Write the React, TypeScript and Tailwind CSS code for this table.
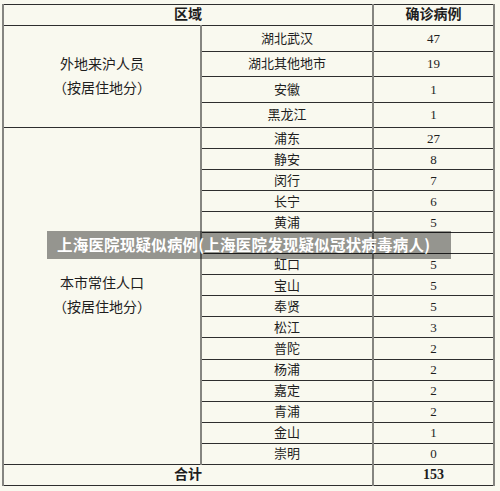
const outside = [
  { name: "湖北武汉", n: "47" },
  { name: "湖北其他地市", n: "19" },
  { name: "安徽", n: "1" },
  { name: "黑龙江", n: "1" },
];

// the sixth row sits under the caption banner, so it shows nothing
const local = [
  { name: "浦东", n: "27" },
  { name: "静安", n: "8" },
  { name: "闵行", n: "7" },
  { name: "长宁", n: "6" },
  { name: "黄浦", n: "5" },
  { name: "", n: "" },
  { name: "虹口", n: "5" },
  { name: "宝山", n: "5" },
  { name: "奉贤", n: "5" },
  { name: "松江", n: "3" },
  { name: "普陀", n: "2" },
  { name: "杨浦", n: "2" },
  { name: "嘉定", n: "2" },
  { name: "青浦", n: "2" },
  { name: "金山", n: "1" },
  { name: "崇明", n: "0" },
];

const cell =
  "border-y border-y-[#2e2e2e] border-x-2 border-x-[#858580] p-0 text-center align-middle";

export default function App() {
  return (
    <div
      className="relative h-[491px] w-[500px] overflow-hidden bg-[#f9f9ef] pl-[2px] pt-[4px] text-[#1e1e1e]"
      style={{ fontFamily: '"Liberation Serif", "Noto Sans CJK SC", serif' }}
    >
      <table className="w-[491px] table-fixed border-collapse text-[13px] leading-none">
        <colgroup>
          <col className="w-[198px]" />
          <col className="w-[172px]" />
          <col className="w-[121px]" />
        </colgroup>
        <tbody>
          <tr className="h-[21px]">
            <td colSpan={2} className={`${cell} font-bold text-[14px]`}>
              区域
            </td>
            <td className={`${cell} font-bold text-[14px]`}>确诊病例</td>
          </tr>
          {outside.map((r, i) => (
            <tr key={i} className="h-[25.5px]">
              {i === 0 && (
                <td rowSpan={outside.length} className={`${cell} text-[14px] leading-[24px]`}>
                  <div>外地来沪人员</div>
                  <div>（按居住地分）</div>
                </td>
              )}
              <td className={cell}>{r.name}</td>
              <td className={cell}>{r.n}</td>
            </tr>
          ))}
          {local.map((r, i) => (
            <tr key={i} className="h-[21.06px]">
              {i === 0 && (
                <td rowSpan={local.length} className={`${cell} text-[14px] leading-[24px]`}>
                  <div>本市常住人口</div>
                  <div>（按居住地分）</div>
                </td>
              )}
              <td className={cell}>{r.name}</td>
              <td className={cell}>{r.n}</td>
            </tr>
          ))}
          <tr className="h-[21px]">
            <td colSpan={2} className={`${cell} font-bold text-[14px]`}>
              合计
            </td>
            <td className={`${cell} font-bold text-[14px]`}>153</td>
          </tr>
        </tbody>
      </table>

      <div
        className="absolute left-[47px] top-[231px] flex h-[28px] w-[404px] items-center bg-black/40 pl-[10px] text-[15.5px] font-bold tracking-[0.2px] text-white"
        style={{ fontFamily: '"Noto Sans CJK SC", sans-serif' }}
      >
        上海医院现疑似病例(上海医院发现疑似冠状病毒病人)
      </div>
    </div>
  );
}
